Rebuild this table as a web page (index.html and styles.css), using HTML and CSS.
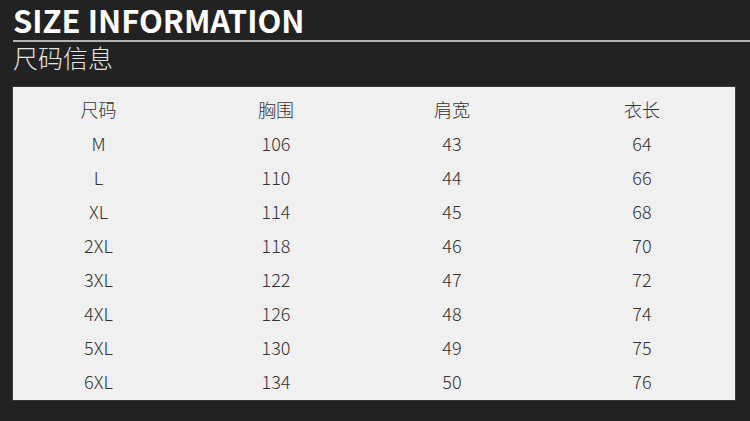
FILE: index.html
```html
<!DOCTYPE html>
<html lang="zh">
<head>
<meta charset="utf-8">
<link rel="stylesheet" href="styles.css">
</head>
<body>
<div class="page">
  <header class="head">
    <h1 class="title">SIZE INFORMATION</h1>
    <div class="rule"></div>
    <div class="subtitle">尺码信息</div>
  </header>
  <section class="panel">
    <div class="grid">
      <div class="cell">尺码</div><div class="cell">胸围</div><div class="cell">肩宽</div><div class="cell">衣长</div>
      <div class="cell">M</div><div class="cell">106</div><div class="cell">43</div><div class="cell">64</div>
      <div class="cell">L</div><div class="cell">110</div><div class="cell">44</div><div class="cell">66</div>
      <div class="cell">XL</div><div class="cell">114</div><div class="cell">45</div><div class="cell">68</div>
      <div class="cell">2XL</div><div class="cell">118</div><div class="cell">46</div><div class="cell">70</div>
      <div class="cell">3XL</div><div class="cell">122</div><div class="cell">47</div><div class="cell">72</div>
      <div class="cell">4XL</div><div class="cell">126</div><div class="cell">48</div><div class="cell">74</div>
      <div class="cell">5XL</div><div class="cell">130</div><div class="cell">49</div><div class="cell">75</div>
      <div class="cell">6XL</div><div class="cell">134</div><div class="cell">50</div><div class="cell">76</div>
    </div>
  </section>
</div>
</body>
</html>
```
FILE: styles.css
```css
html, body {
  margin: 0;
  padding: 0;
  background: #222222;
}
body {
  width: 750px;
  height: 421px;
  overflow: hidden;
  font-family: "Noto Sans CJK SC", "Noto Sans", sans-serif;
}
.page {
  display: flex;
  flex-direction: column;
}
.head {
  padding-left: 13px;
}
.title {
  margin: 0;
  font-size: 31px;
  line-height: 39px;
  font-weight: 700;
  color: #ffffff;
}
.rule {
  height: 2px;
  margin-top: 1px;
  background: #b4b4b4;
}
.subtitle {
  font-size: 25px;
  line-height: 30px;
  color: #e4e4e4;
  font-weight: 300;
}
.panel {
  margin: 14px 0 0 12px;
  width: 722px;
  height: 313px;
  box-sizing: content-box;
  background: #f0f0f0;
  border: 1px solid #3a3a3a;
  padding: 0;
  overflow: hidden;
}
.grid {
  display: grid;
  grid-template-columns: 171px 184px 168px 212px;
  grid-auto-rows: 34px;
  padding-top: 5px;
}
.cell {
  text-align: center;
  font-size: 18px;
  line-height: 34px;
  color: #333333;
  font-weight: 300;
}
```
